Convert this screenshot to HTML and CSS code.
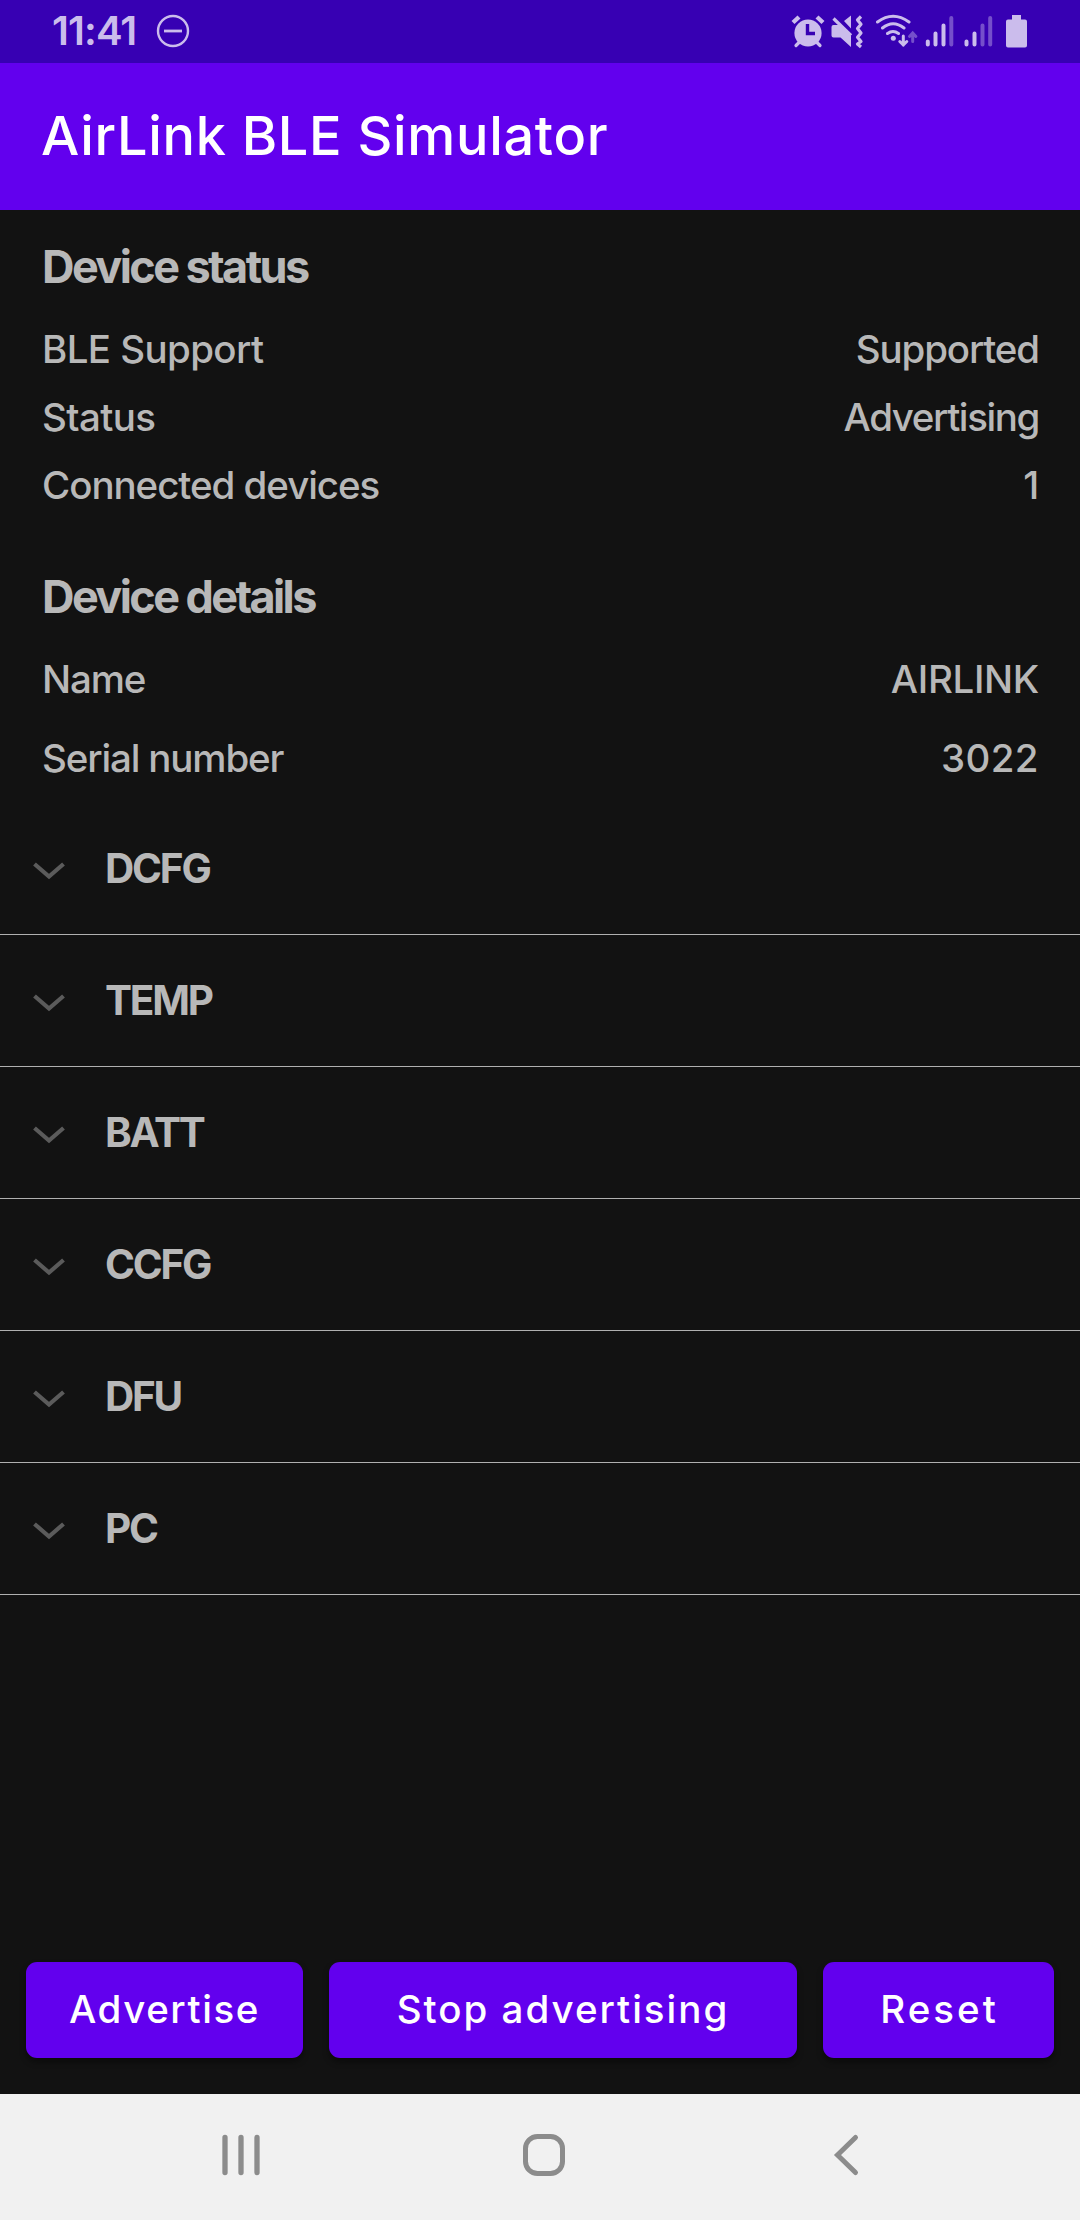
FILE: index.html
```
<!DOCTYPE html>
<html lang="en">
<head>
<meta charset="utf-8">
<title>AirLink BLE Simulator</title>
<link rel="stylesheet" href="styles.css">
</head>
<body>
<div class="screen">
  <div class="status-bar">
    <span class="clock">11:41</span>
    <svg class="dnd" width="34" height="34" viewBox="0 0 34 34"><circle cx="17" cy="17" r="15" fill="none" stroke="currentColor" stroke-width="2.4"/><path d="M8 17h18" stroke="currentColor" stroke-width="2.8"/></svg>
    <svg class="status-icons" width="240" height="36" viewBox="790 12 240 36" fill="none" stroke="currentColor" stroke-linecap="round">
      <g>
        <circle cx="808" cy="32" r="13.6" fill="currentColor" stroke="none"/>
        <path d="M793 21.500l6-5.500M823 21.500l-6-5.500" stroke-width="4.400" stroke-linecap="butt"/>
        <path d="M799.500 41l-3.500 3.500M816.500 41l3.500 3.500" stroke-width="3.200"/>
        <path d="M807.500 23v9.500h7.500" stroke="#3700b3" stroke-width="3.400" stroke-linecap="butt"/>
      </g>
      <g>
        <path d="M831.500 26q0-2 2-2h6.500l11 11v11l-10.500-9.500h-7q-2 0-2-2zM844 20l7-5.500v13z" fill="currentColor" stroke="none"/>
        <path d="M833.500 17.500l17.500 17" stroke-width="3.200" stroke-linecap="butt"/>
        <path d="M861 15.500l-3.500 3.500 3.500 4.300-3.500 4.300 3.500 4.300-3.500 4.300 3.500 4.300-3.500 2.500 3.500 3" stroke-width="3.200" stroke-linecap="butt" stroke-linejoin="round"/>
      </g>
      <g stroke-width="3">
        <path d="M877.500 21q15.500-11.500 31.500 0M882.500 27q10.500-8.500 21.500 0M887.500 32.500q5.500-4 11 0"/>
        <circle cx="893.300" cy="37.200" r="2.500" fill="currentColor" stroke="none"/>
        <path d="M903.300 35v9M899.800 40.500l3.500 3.500 3.500-3.500"/>
        <path d="M912.700 40.500v-8M909.500 35.500l3.200-3.500 3.200 3.500" opacity=".42"/>
      </g>
      <g stroke-width="4">
        <path d="M927.800 40.500v3M935.500 32.500v11M943.500 24.500v19M966.500 40.500v3M974.500 32.500v11"/>
        <path d="M951.300 17v26.500M982.500 24.500v19M990.200 17v26.500" opacity=".42"/>
      </g>
      <path d="M1012 14h9v4.500h4q2 0 2 2v24q0 2-2 2h-17q-2 0-2-2v-24q0-2 2-2h4z" fill="currentColor" stroke="none"/>
    </svg>
  </div>

  <header class="app-bar"><h1 class="app-title">AirLink BLE Simulator</h1></header>

  <main class="content">
    <section class="section">
      <h2 class="section-title">Device status</h2>
      <div class="row"><span class="wide">BLE Support</span><span>Supported</span></div>
      <div class="row"><span class="wide">Status</span><span class="tight">Advertising</span></div>
      <div class="row"><span class="label-long">Connected devices</span><span class="count">1</span></div>
    </section>
    <section class="section details">
      <h2 class="section-title">Device details</h2>
      <div class="row"><span>Name</span><span class="caps">AIRLINK</span></div>
      <div class="row spaced"><span>Serial number</span><span class="digits">3022</span></div>
    </section>
    <ul class="groups">
      <li class="group"><svg class="chevron" width="32" height="18" viewBox="0 0 32 18"><path d="M1.500 2L16 14.500 30.500 2"/></svg><span>DCFG</span></li>
      <li class="group"><svg class="chevron" width="32" height="18" viewBox="0 0 32 18"><path d="M1.500 2L16 14.500 30.500 2"/></svg><span>TEMP</span></li>
      <li class="group"><svg class="chevron" width="32" height="18" viewBox="0 0 32 18"><path d="M1.500 2L16 14.500 30.500 2"/></svg><span>BATT</span></li>
      <li class="group"><svg class="chevron" width="32" height="18" viewBox="0 0 32 18"><path d="M1.500 2L16 14.500 30.500 2"/></svg><span>CCFG</span></li>
      <li class="group"><svg class="chevron" width="32" height="18" viewBox="0 0 32 18"><path d="M1.500 2L16 14.500 30.500 2"/></svg><span>DFU</span></li>
      <li class="group"><svg class="chevron" width="32" height="18" viewBox="0 0 32 18"><path d="M1.500 2L16 14.500 30.500 2"/></svg><span>PC</span></li>
    </ul>
  </main>

  <div class="actions">
    <button class="button advertise">Advertise</button>
    <button class="button stop">Stop advertising</button>
    <button class="button reset">Reset</button>
  </div>

  <nav class="nav-bar">
    <svg width="44" height="44" viewBox="0 0 44 44"><path d="M6 4.500v35M22 4.500v35M38 4.500v35" stroke-width="5.300"/></svg>
    <svg width="44" height="44" viewBox="0 0 44 44"><rect x="3.500" y="3.500" width="37" height="37" rx="12" stroke-width="5"/></svg>
    <svg width="44" height="44" viewBox="0 0 44 44"><path d="M31.500 4.500L13.500 22l18 17.500" stroke-width="5"/></svg>
  </nav>
</div>
</body>
</html>
```
FILE: styles.css
```
* { box-sizing: border-box; margin: 0; padding: 0; }

body {
  background: #121212;
  color: #b8b8b8;
  font-family: Inter, "Liberation Sans", sans-serif;
  font-weight: 500;
}

.screen {
  display: flex;
  flex-direction: column;
  width: 1080px;
  height: 2220px;
}

.status-bar {
  display: flex;
  align-items: center;
  height: 63px;
  padding: 0 50px 2px 52px;
  background: #3700b3;
  color: #cbbcec;
}
.clock { font-size: 40px; font-weight: 600; line-height: 60px; letter-spacing: -0.9px; }
.dnd { margin-left: 20px; }
.status-icons { margin-left: auto; }

.app-bar {
  display: flex;
  align-items: center;
  height: 147px;
  padding: 0 42px 2px 41px;
  background: #6200ee;
  color: #fff;
}
.app-title { font-size: 54px; font-weight: 500; line-height: 80px; letter-spacing: 0.7px; }

.content { flex: 1; padding-top: 28px; }

.section { padding: 0 41px 0 42px; }
.details { margin-top: 49px; }
.section-title {
  margin-bottom: 20px;
  font-size: 45px;
  font-weight: 700;
  line-height: 57px;
  letter-spacing: -2.6px;
}
.row {
  display: flex;
  justify-content: space-between;
  font-size: 38.5px;
  line-height: 68px;
  letter-spacing: -1.15px;
}
.row.spaced { margin-top: 11px; }
.wide { letter-spacing: -0.6px; }
.label-long { letter-spacing: -1.05px; }
.tight { letter-spacing: -1.4px; }
.caps { letter-spacing: -0.35px; }
.digits { letter-spacing: 0.4px; }
.count { padding-right: 1px; }

.groups { margin-top: 11px; list-style: none; }
.group {
  display: flex;
  align-items: center;
  gap: 40px;
  height: 132px;
  padding: 0 33px 1px;
  border-bottom: 1px solid #b0b0b0;
  font-size: 40.5px;
  font-weight: 700;
  letter-spacing: -2.2px;
}
.chevron { margin-top: 5px; fill: none; stroke: #5b5b5b; stroke-width: 4.2; }

.actions {
  display: grid;
  grid-template-columns: 277px 468px 231px;
  gap: 26px;
  padding: 0 26px 36px;
}
.button {
  height: 96px;
  padding-bottom: 2px;
  border: 0;
  border-radius: 11px;
  background: #6200ee;
  color: #fff;
  font: 500 38.5px Inter, "Liberation Sans", sans-serif;
  letter-spacing: 2px;
  box-shadow: 0 4px 6px rgba(0, 0, 0, 0.4);
}
.advertise { letter-spacing: 1.6px; }
.reset { padding-left: 2px; letter-spacing: 3px; }

.nav-bar {
  display: flex;
  align-items: center;
  justify-content: space-between;
  height: 126px;
  padding: 0 212px 4px 219px;
  background: #f1f1f1;
}
.nav-bar svg { fill: none; stroke: #8c8c8c; stroke-linecap: round; stroke-linejoin: miter; }
```
